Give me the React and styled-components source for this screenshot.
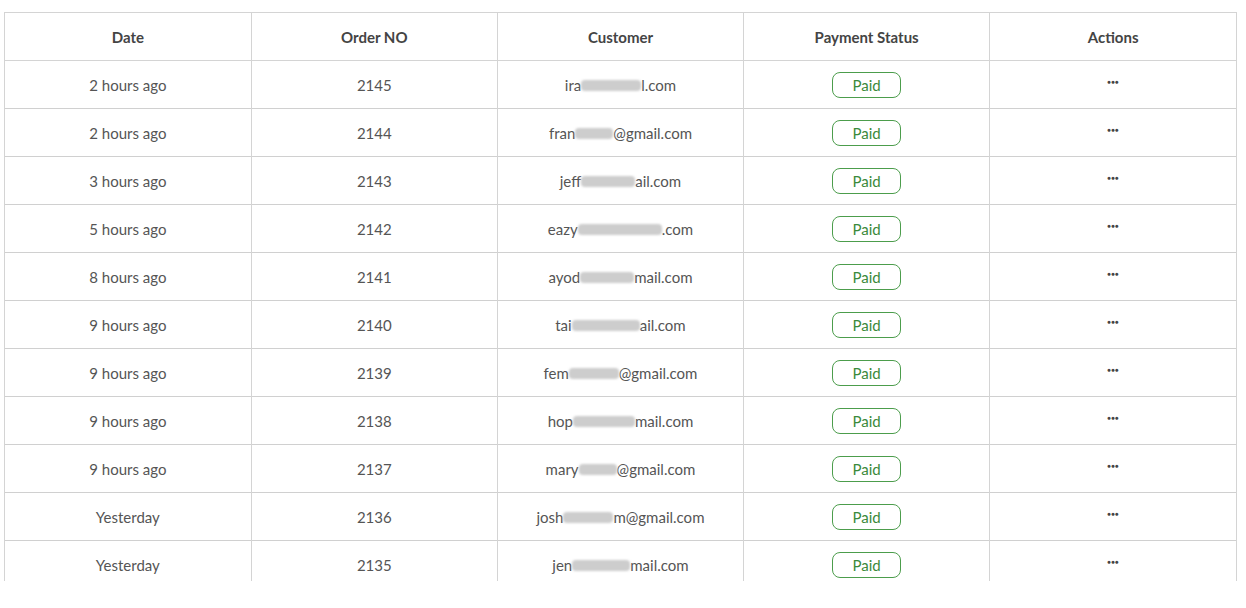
import styled, { createGlobalStyle } from 'styled-components'

const GlobalStyle = createGlobalStyle`
    body {
        margin: 0;
        background: #fff;
        font-family: Lato, "Open Sans", sans-serif;
    }
`

const Page = styled.div`
    padding: 12px 9px 0 4px;
`
const Frame = styled.div`
    height: 568px;
    overflow: hidden;
    border: 1px solid #d4d4d4;
    border-bottom: none;
`
const Table = styled.table`
    width: 100%;
    border-collapse: collapse;
    table-layout: fixed;
`
const Head = styled.th`
    height: 47px;
    padding: 0;
    font-size: 15px;
    font-weight: 700;
    color: #444;
    text-align: center;
    border-bottom: 1px solid #d4d4d4;
    & + & {
        border-left: 1px solid #d4d4d4;
    }
`
const Row = styled.tr`
    border-bottom: 1px solid #d0d0d0;
`
const Cell = styled.td`
    height: 47px;
    padding: 0;
    font-size: 15px;
    line-height: 18px;
    color: #555;
    text-align: center;
    vertical-align: middle;
    & + & {
        border-left: 1px solid #d4d4d4;
    }
`
const Email = styled.span`
    display: inline-flex;
    align-items: center;
    white-space: nowrap;
`
const Smudge = styled.span`
    display: inline-block;
    width: ${p => p.$w}px;
    height: 11px;
    margin-top: 2px;
    background: #cdcdcd;
    border-radius: 4px;
    filter: blur(1.3px);
`
const Badge = styled.span`
    display: inline-flex;
    align-items: center;
    justify-content: center;
    width: 67px;
    height: 24px;
    border: 1px solid #4c9d4c;
    border-radius: 8px;
    color: #3b8a3b;
    font-size: 15px;
`
const Dots = styled.span`
    display: inline-block;
    font-size: 6px;
    letter-spacing: 0.3px;
    color: #444;
    transform: translateY(-5px);
`

const orders = [
    { date: '2 hours ago', no: 2145, pre: 'ira', w: 60, post: 'l.com' },
    { date: '2 hours ago', no: 2144, pre: 'fran', w: 38, post: '@gmail.com' },
    { date: '3 hours ago', no: 2143, pre: 'jeff', w: 54, post: 'ail.com' },
    { date: '5 hours ago', no: 2142, pre: 'eazy', w: 84, post: '.com' },
    { date: '8 hours ago', no: 2141, pre: 'ayod', w: 54, post: 'mail.com' },
    { date: '9 hours ago', no: 2140, pre: 'tai', w: 68, post: 'ail.com' },
    { date: '9 hours ago', no: 2139, pre: 'fem', w: 50, post: '@gmail.com' },
    { date: '9 hours ago', no: 2138, pre: 'hop', w: 62, post: 'mail.com' },
    { date: '9 hours ago', no: 2137, pre: 'mary', w: 38, post: '@gmail.com' },
    { date: 'Yesterday', no: 2136, pre: 'josh', w: 50, post: 'm@gmail.com' },
    { date: 'Yesterday', no: 2135, pre: 'jen', w: 58, post: 'mail.com' },
]

const App = () => {
    return (
        <Page>
            <GlobalStyle />
            <Frame>
                <Table>
                    <thead>
                        <tr>
                            <Head>Date</Head>
                            <Head>Order NO</Head>
                            <Head>Customer</Head>
                            <Head>Payment Status</Head>
                            <Head>Actions</Head>
                        </tr>
                    </thead>
                    <tbody>
                        {orders.map(o => (
                            <Row key={o.no}>
                                <Cell>{o.date}</Cell>
                                <Cell>{o.no}</Cell>
                                <Cell>
                                    <Email>{o.pre}<Smudge $w={o.w} />{o.post}</Email>
                                </Cell>
                                <Cell><Badge>Paid</Badge></Cell>
                                <Cell><Dots>●●●</Dots></Cell>
                            </Row>
                        ))}
                    </tbody>
                </Table>
            </Frame>
        </Page>
    )
}

export default App
